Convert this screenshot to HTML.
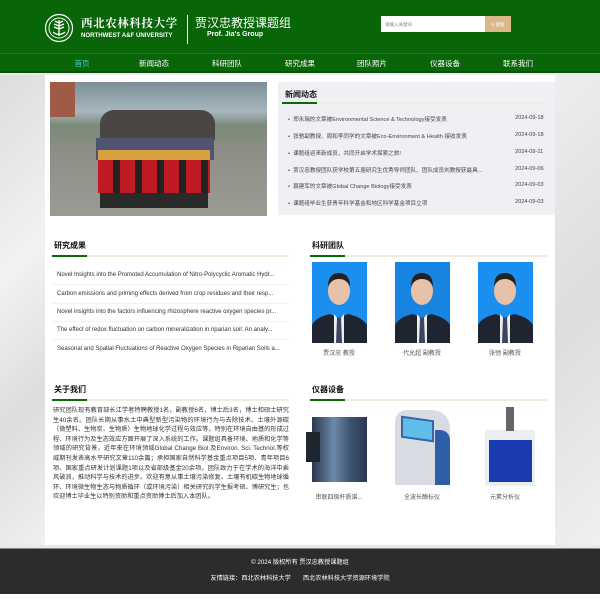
<!DOCTYPE html>
<html><head><meta charset="utf-8"><style>
*{margin:0;padding:0;box-sizing:border-box}
body{width:600px;height:600px;position:relative;overflow:hidden;background:#e9e9e9;font-family:"Liberation Sans","Noto Sans CJK SC",sans-serif;color:#333}
.a{position:absolute}
.hdr{left:0;top:0;width:600px;height:53px;background:#086508}
.nav{left:0;top:53px;width:600px;height:20px;background:#086508;border-top:1px solid #1c7a1c;border-bottom:2px solid #0a4f0a}
.nav span{position:absolute;top:4px;font-size:7.5px;color:#fff;transform:translateX(-50%)}
.main{left:45px;top:75px;width:510px;height:470px;background:#fff}
.h{font-size:8px;font-weight:bold;color:#111}
.ln{height:2px;background:#f1ece0}
.ln i{display:block;width:35px;height:2px;background:#0a6a0a}
.nw{font-size:5.6px;color:#444;white-space:nowrap}
.rs{left:52px;width:237px;height:19px;border-bottom:1px solid #f1f1f1;font-size:6px;color:#333;padding:6px 0 0 5px;white-space:nowrap;overflow:hidden}
.ph{width:55px;height:81px;background:#1a8ff0}
.cap{font-size:6px;color:#555;text-align:center;width:70px}
</style></head><body>
<div class="a" style="left:0;top:75px;width:45px;height:470px;background:linear-gradient(135deg,#ddd,#f2f2f2 40%,#ddd 70%,#f0f0f0)"></div>
<div class="a" style="left:555px;top:75px;width:45px;height:470px;background:linear-gradient(135deg,#eee,#ddd 50%,#f0f0f0)"></div>
<div class="a hdr"></div>
<svg class="a" style="left:44px;top:13px" width="30" height="30" viewBox="0 0 30 30"><circle cx="15" cy="15" r="13.5" fill="none" stroke="#fff" stroke-width="1.2"/><circle cx="15" cy="15" r="10" fill="none" stroke="#fff" stroke-width="1"/><path d="M15 7v16M15 10l-4-2M15 13l-5-2M15 16l-5-2M15 10l4-2M15 13l5-2M15 16l5-2M9 19q6 5 12 0" stroke="#fff" stroke-width="1.3" fill="none"/></svg>
<div class="a" style="left:81px;top:15px;color:#fff;font-size:11.5px;font-weight:bold;letter-spacing:0.6px;font-family:'Noto Serif CJK SC',serif;white-space:nowrap">西北农林科技大学</div>
<div class="a" style="left:81px;top:32px;color:#fff;font-size:6.1px;font-weight:bold;white-space:nowrap">NORTHWEST A&amp;F UNIVERSITY</div>
<div class="a" style="left:187px;top:15px;width:1px;height:29px;background:#fff"></div>
<div class="a" style="left:195px;top:14px;color:#fff;font-size:12px">贾汉忠教授课题组</div>
<div class="a" style="left:207px;top:31px;color:#fff;font-size:7px;font-weight:bold">Prof. Jia's Group</div>
<div class="a" style="left:381px;top:16px;width:104px;height:16px;background:#fff;font-size:4.5px;color:#888;padding:6px 0 0 4px">请输入关键词</div>
<div class="a" style="left:485px;top:16px;width:26px;height:16px;background:#d9b98a;font-size:4.5px;color:#fff;padding:6px 0 0 6px">⚲ 搜索</div>
<div class="a nav">
<span style="left:82px;color:#3fd0d0">首页</span><span style="left:154px">新闻动态</span><span style="left:227px">科研团队</span><span style="left:300px">研究成果</span><span style="left:372px">团队照片</span><span style="left:445px">仪器设备</span><span style="left:518px">联系我们</span></div>
<div class="a main"></div>
<!-- photo -->
<div class="a" style="left:50px;top:82px;width:217px;height:134px;background:linear-gradient(#7d8e98 0,#a7b7bf 22%,#7b8a78 32%,#8f8f88 55%,#9c9a94 100%)"></div>
<div class="a" style="left:50px;top:82px;width:25px;height:35px;background:#a05a48"></div>
<div class="a" style="left:100px;top:110px;width:115px;height:30px;background:#4a4644;border-radius:14px 14px 0 0"></div>
<div class="a" style="left:96px;top:138px;width:118px;height:22px;background:#505470"></div>
<div class="a" style="left:98px;top:150px;width:112px;height:12px;background:#d9a040"></div>
<div class="a" style="left:98px;top:160px;width:112px;height:33px;background:repeating-linear-gradient(90deg,#c01a22 0 15px,#222 15px 22px)"></div>
<div class="a" style="left:100px;top:193px;width:108px;height:15px;background:#2a2a2a"></div>
<!-- news -->
<div class="a" style="left:278px;top:82px;width:277px;height:133px;background:#eef0f3"></div>
<div class="a h" style="left:285px;top:89px">新闻动态</div>
<div class="a ln" style="left:282px;top:102px;width:265px"><i></i></div>
<div class="a nw" style="left:288px;top:115px">•&nbsp; 郑永瑞的文章被Environmental Science &amp; Technology接受发表</div><div class="a nw" style="left:515px;top:115px">2024-09-18</div>
<div class="a nw" style="left:288px;top:132px">•&nbsp; 张驰副教授、周和李同学的文章被Eco-Environment &amp; Health 接收发表</div><div class="a nw" style="left:515px;top:132px">2024-09-18</div>
<div class="a nw" style="left:288px;top:149px">•&nbsp; 课题组迎来新成员，共同开启学术探索之旅!</div><div class="a nw" style="left:515px;top:149px">2024-09-11</div>
<div class="a nw" style="left:288px;top:166px">•&nbsp; 贾汉忠教授团队获学校第五届研究生优秀导师团队、团队成员刘教授获最具...</div><div class="a nw" style="left:515px;top:166px">2024-09-06</div>
<div class="a nw" style="left:288px;top:182px">•&nbsp; 聂建军的文章被Global Change Biology接受发表</div><div class="a nw" style="left:515px;top:182px">2024-09-03</div>
<div class="a nw" style="left:288px;top:199px">•&nbsp; 课题组毕业生获青年科学基金和地区科学基金项目立项</div><div class="a nw" style="left:515px;top:199px">2024-09-03</div>
<!-- research -->
<div class="a h" style="left:54px;top:240px">研究成果</div>
<div class="a ln" style="left:52px;top:255px;width:237px"><i></i></div>
<div class="a rs" style="top:266px">Novel Insights into the Promoted Accumulation of Nitro-Polycyclic Aromatic Hydr...</div>
<div class="a rs" style="top:285px">Carbon emissions and priming effects derived from crop residues and their resp...</div>
<div class="a rs" style="top:303px">Novel insights into the factors influencing rhizosphere reactive oxygen species pr...</div>
<div class="a rs" style="top:321px">The effect of redox fluctuation on carbon mineralization in riparian soil: An analy...</div>
<div class="a rs" style="top:340px;border:0">Seasonal and Spatial Fluctuations of Reactive Oxygen Species in Riparian Soils a...</div>
<!-- team -->
<div class="a h" style="left:312px;top:240px">科研团队</div>
<div class="a ln" style="left:310px;top:255px;width:237px"><i></i></div>
<div class="a ph" style="left:312px;top:262px"></div><div class="a ph" style="left:395px;top:262px;background:#1684e0"></div><div class="a ph" style="left:478px;top:262px"></div>
<svg class="a" style="left:312px;top:262px" width="221" height="81"><g id="p"><ellipse cx="27" cy="29" rx="11" ry="14" fill="#e8c2a8"/><path d="M16 25q0-14 11-14t11 14q-3-8-11-8t-11 8z" fill="#222"/><path d="M0 81v-18q4-8 18-11l9 4 9-4q14 3 19 11v18z" fill="#1e2430"/><path d="M22 52l5 6 5-6 0 29h-10z" fill="#eee"/><path d="M25 56h4l1 25h-6z" fill="#3b4460"/></g><use href="#p" x="83"/><use href="#p" x="166"/></svg>
<div class="a cap" style="left:304px;top:348px">贾汉忠 教授</div>
<div class="a cap" style="left:387px;top:348px">代允超 副教授</div>
<div class="a cap" style="left:470px;top:348px">张弛 副教授</div>
<!-- about -->
<div class="a h" style="left:54px;top:384px">关于我们</div>
<div class="a ln" style="left:52px;top:399px;width:237px"><i></i></div>
<div class="a" style="left:53px;top:406px;width:236px;font-size:6.2px;line-height:9.6px;color:#333;text-align:justify">研究团队现有教育部长江学者特聘教授1名，副教授6名，博士后3名，博士和硕士研究生40余名。团队长期从事水土中典型新型污染物的环境行为与去除技术、土壤外源碳（微塑料、生物炭、生物质）生物地球化学过程与效应等，特别在环境自由基的形成过程、环境行为及生态效应方面开展了深入系统的工作。课题组具备环境、地质和化学等领域的研究背景，近年来在环境领域Global Change Biol.及Environ. Sci. Technol.等权威期刊发表高水平研究文章110余篇；承担国家自然科学基金重点项目5项、青年项目6项、国家重点研发计划课题1项以及省部级基金20余项。团队致力于在学术的海洋中乘风破浪，推动科学与技术的进步。欢迎有意从事土壤污染修复、土壤有机碳生物地球循环、环境微生物生态与物质循环（或环境污染）相关研究的学生报考硕、博研究生；也欢迎博士毕业生以特别资助和重点资助博士后加入本团队。</div>
<!-- instruments -->
<div class="a h" style="left:312px;top:384px">仪器设备</div>
<div class="a ln" style="left:310px;top:399px;width:237px"><i></i></div>
<div class="a" style="left:312px;top:417px;width:55px;height:65px;background:linear-gradient(90deg,#2b3850,#6d89a8 40%,#3d5270 70%,#2b3850)"></div>
<div class="a" style="left:306px;top:432px;width:14px;height:30px;background:#1e2630"></div>
<div class="a" style="left:395px;top:410px;width:55px;height:75px;background:#d8dce2;border-radius:12px 18px 2px 2px"></div>
<div class="a" style="left:435px;top:430px;width:15px;height:55px;background:#2d5ea8;border-radius:0 10px 0 0"></div>
<div class="a" style="left:401px;top:418px;width:33px;height:22px;background:#5fbde8;border:2px solid #3864a8;transform:skewY(8deg)"></div>
<div class="a" style="left:485px;top:430px;width:50px;height:56px;background:#eceff2"></div>
<div class="a" style="left:489px;top:440px;width:43px;height:42px;background:#1d3bb0"></div>
<div class="a" style="left:506px;top:407px;width:8px;height:24px;background:#666"></div>
<div class="a cap" style="left:304px;top:492px">串联四极杆质谱...</div>
<div class="a cap" style="left:387px;top:492px">全波长酶标仪</div>
<div class="a cap" style="left:470px;top:492px">元素分析仪</div>
<!-- footer -->
<div class="a" style="left:0;top:548px;width:600px;height:46px;background:#2c2c2c;border-top:1px solid #888"></div>
<div class="a" style="left:0;top:557px;width:600px;text-align:center;color:#fff;font-size:6.2px">© 2024 版权所有 贾汉忠教授课题组</div>
<div class="a" style="left:0;top:573px;width:600px;text-align:center;color:#fff;font-size:6.2px">友情链接：西北农林科技大学 &nbsp;&nbsp;&nbsp;&nbsp;&nbsp; 西北农林科技大学资源环境学院</div>
<div class="a" style="left:0;top:594px;width:600px;height:6px;background:#fff"></div>
</body></html>
